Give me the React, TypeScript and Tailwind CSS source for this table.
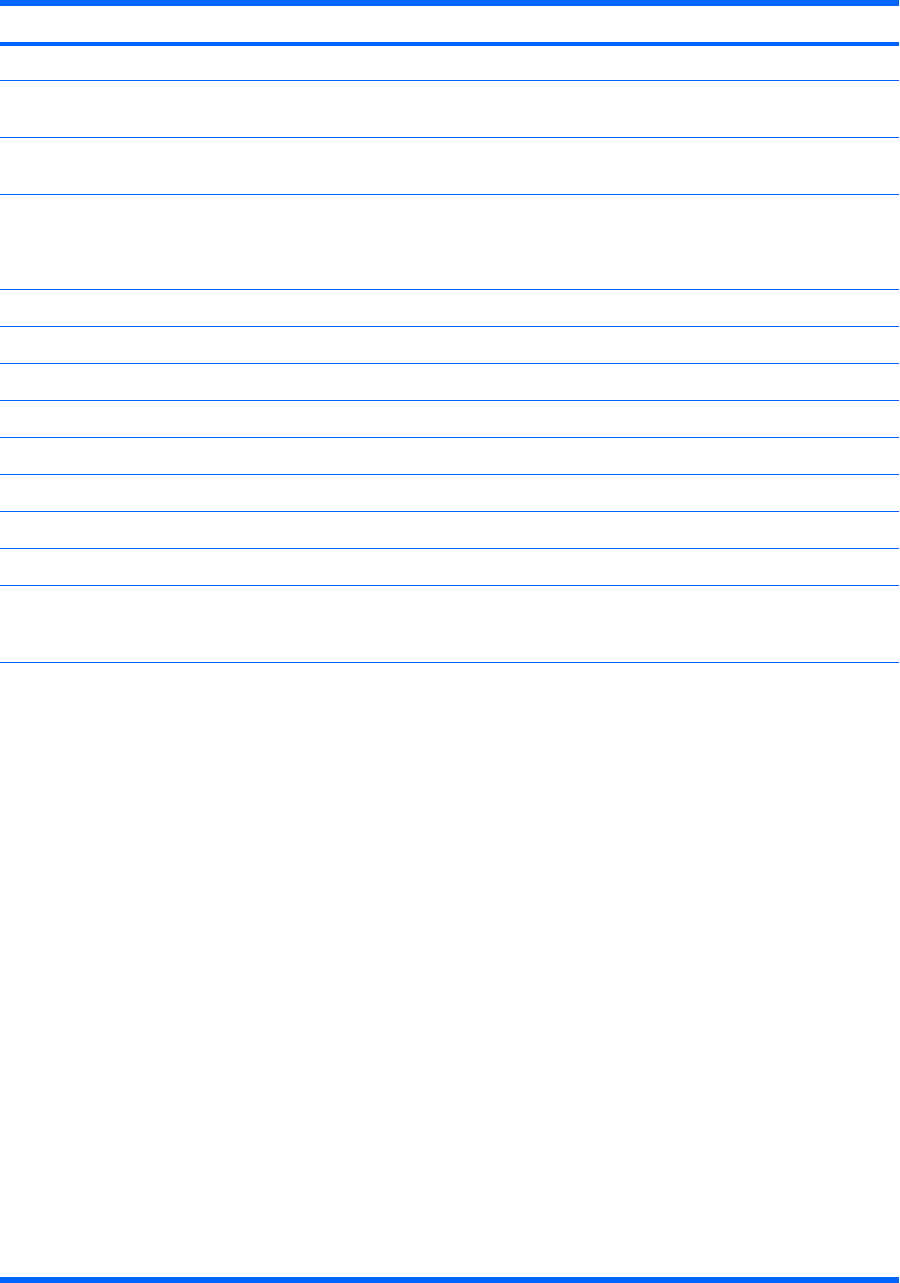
const rows = [34, 56, 56, 94, 36, 36, 36, 36, 36, 36, 36, 36, 76];

export default function App() {
  return (
    <div className="h-[1283px] w-[900px] bg-white flex flex-col font-['Liberation_Sans',sans-serif]">
      <div className="w-[899px]">
        <div className="h-[46px] border-t-[6px] border-b-[4px] border-[#0066ff]" />
        {rows.map((h, i) => (
          <div
            key={i}
            className="border-b border-[#0066ff]"
            style={{ height: h + 1 }}
          />
        ))}
      </div>
      <div className="flex-1" />
      <div className="h-[6px] w-[899px] bg-[#0066ff]" />
    </div>
  );
}
